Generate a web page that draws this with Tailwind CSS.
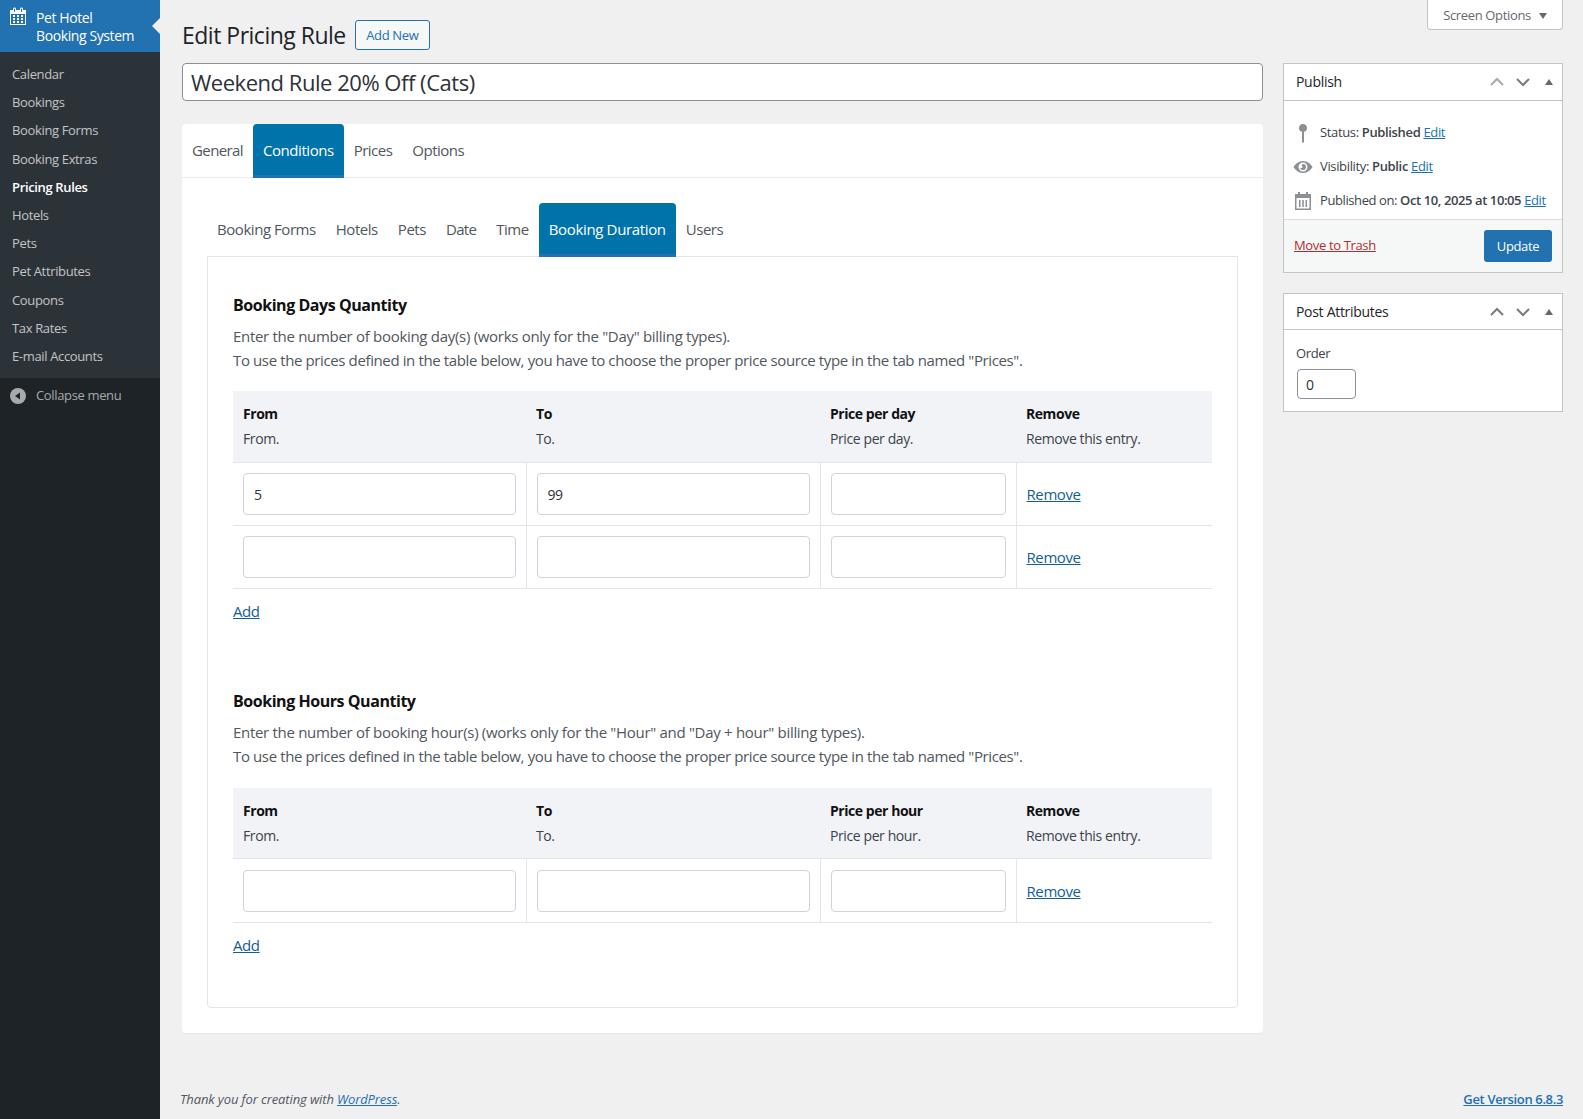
<!DOCTYPE html>
<html lang="en">
<head>
  <meta charset="UTF-8">
  <title>Edit Pricing Rule</title>
  <script src="https://cdn.jsdelivr.net/npm/@tailwindcss/browser@4"></script>
</head>
<body class="bg-[#f0f0f1] font-['Open_Sans',sans-serif] text-[13px] tracking-[-0.35px] text-[#3c434a]">
  <div class="flex h-[1119px] overflow-hidden">

    <!-- admin menu -->
    <aside class="w-[160px] shrink-0 bg-[#1d2327] text-[#c3c4c7]">
      <div class="relative flex h-[52px] bg-[#2271b1] pl-[8px] text-white">
        <svg class="mt-[6px] h-[20px] w-[20px] shrink-0" viewBox="0 0 20 20" fill="currentColor"><path d="M15 4h3v15H2V4h3V3c0-.41.15-.76.44-1.06.29-.29.65-.44 1.06-.44s.77.15 1.06.44c.29.3.44.65.44 1.06v1h4V3c0-.41.15-.76.44-1.06.29-.29.65-.44 1.06-.44s.77.15 1.06.44c.29.3.44.65.44 1.06v1zM6 3v2.500c0 .14.05.26.15.35.09.1.21.15.35.15s.26-.05.35-.15c.1-.09.15-.21.15-.35V3c0-.14-.05-.26-.15-.35-.09-.1-.21-.15-.35-.15s-.26.05-.35.15c-.1.09-.15.21-.15.35zm7 0v2.500c0 .14.05.26.14.35.1.1.22.15.36.15s.26-.05.36-.15c.09-.09.14-.21.14-.35V3c0-.14-.05-.26-.14-.35-.1-.1-.22-.15-.36-.15s-.26.05-.36.15c-.09.09-.14.21-.14.35zm4 15V8H3v10h14zM7 9v2H5V9h2zm2 0h2v2H9V9zm4 2V9h2v2h-2zm-6 1v2H5v-2h2zm2 0h2v2H9v-2zm4 2v-2h2v2h-2zm-6 1v2H5v-2h2zm4 2H9v-2h2v2zm4 0h-2v-2h2v2z"/></svg>
        <div class="ml-[8px] pt-[9px] text-[14px] leading-[18px] tracking-[-0.4px]">Pet Hotel<br>Booking System</div>
        <span class="absolute right-0 top-[18px] h-0 w-0 border-y-[8px] border-r-[8px] border-y-transparent border-r-[#f0f0f1]"></span>
      </div>
      <nav class="bg-[#2c3338] py-[8px]">
        <a class="block px-[12px] py-[5px] leading-[18.2px]">Calendar</a>
        <a class="block px-[12px] py-[5px] leading-[18.2px]">Bookings</a>
        <a class="block px-[12px] py-[5px] leading-[18.2px]">Booking Forms</a>
        <a class="block px-[12px] py-[5px] leading-[18.2px]">Booking Extras</a>
        <a class="block px-[12px] py-[5px] font-semibold leading-[18.2px] text-white">Pricing Rules</a>
        <a class="block px-[12px] py-[5px] leading-[18.2px]">Hotels</a>
        <a class="block px-[12px] py-[5px] leading-[18.2px]">Pets</a>
        <a class="block px-[12px] py-[5px] leading-[18.2px]">Pet Attributes</a>
        <a class="block px-[12px] py-[5px] leading-[18.2px]">Coupons</a>
        <a class="block px-[12px] py-[5px] leading-[18.2px]">Tax Rates</a>
        <a class="block px-[12px] py-[5px] leading-[18.2px]">E-mail Accounts</a>
      </nav>
      <div class="flex h-[36px] items-center pl-[10px] text-[#a7aaad]">
        <svg class="h-[16px] w-[16px]" viewBox="0 0 16 16"><circle cx="8" cy="8" r="8" fill="#a7aaad"/><path d="M10 4.500v7L5 8z" fill="#1d2327"/></svg>
        <span class="ml-[10px]">Collapse menu</span>
      </div>
    </aside>

    <!-- page -->
    <main class="relative flex min-w-0 flex-1 flex-col pl-[22px] pr-[20px]">
      <button class="absolute right-[20px] top-0 flex h-[30px] w-[136px] items-center justify-center gap-[8px] rounded-b-[4px] border border-t-0 border-[#c3c4c7] bg-white pt-[2px] text-[#646970]">
        Screen Options
        <span class="h-0 w-0 border-x-[4px] border-t-[6px] border-x-transparent border-t-[#646970]"></span>
      </button>

      <div class="mt-[20px] mb-[13px] flex h-[30px] items-center">
        <h1 class="text-[23px] leading-[30px] tracking-[-0.5px] text-[#1d2327]">Edit Pricing Rule</h1>
        <a class="ml-[9px] flex h-[30px] w-[75px] items-center justify-center rounded-[3px] border border-[#2271b1] bg-[#f6f7f7] pt-[1px] text-[#2271b1]">Add New</a>
      </div>

      <div class="flex gap-[20px]">
        <div class="min-w-0 flex-1">
          <input class="h-[38px] w-full rounded-[4px] border border-[#8c8f94] bg-white px-[8px] text-[22px] tracking-[-0.47px] text-[#2c3338]" value="Weekend Rule 20% Off (Cats)">

          <section class="mt-[23px] h-[909px] rounded-[4px] bg-white shadow-[0_1px_1px_rgba(0,0,0,0.04)]">
            <div class="flex h-[54px] border-b border-[#eaeaee] text-[15px] tracking-[-0.5px]">
              <a class="flex items-center px-[10px] tracking-[-0.6px] text-[#50575e]">General</a>
              <a class="-mb-px flex items-center rounded-t-[4px] border-b-[3px] border-[#2271b1] bg-[#0073aa] px-[10px] pt-[1px] tracking-[-0.45px] text-white">Conditions</a>
              <a class="flex items-center px-[10px] text-[#50575e]">Prices</a>
              <a class="flex items-center px-[10px] text-[#50575e]">Options</a>
            </div>

            <div class="mx-[25px] mt-[25px]">
              <div class="flex h-[53px] text-[15px] tracking-[-0.45px]">
                <a class="flex items-center px-[10px] text-[#50575e]">Booking Forms</a>
                <a class="flex items-center px-[10px] text-[#50575e]">Hotels</a>
                <a class="flex items-center px-[10px] text-[#50575e]">Pets</a>
                <a class="flex items-center px-[10px] tracking-[-0.7px] text-[#50575e]">Date</a>
                <a class="flex items-center px-[10px] text-[#50575e]">Time</a>
                <a class="relative z-10 -mb-px flex items-center rounded-t-[4px] border-b-[3px] border-[#2271b1] bg-[#0073aa] px-[10px] pt-[1px] tracking-[-0.35px] text-white">Booking Duration</a>
                <a class="flex items-center px-[10px] text-[#50575e]">Users</a>
              </div>

              <div class="h-[752px] rounded-b-[4px] border border-[#e4e4ea] px-[25px] pt-[36px]">
                <h3 class="text-[16px] font-bold leading-[24px] tracking-[-0.45px] text-[#111]">Booking Days Quantity</h3>
                <p class="mt-[7px] text-[15px] leading-[24px] tracking-[-0.38px] text-[#50575e]"><span class="tracking-[-0.3px]">Enter the number of booking day(s) (works only for the "Day" billing types).</span><br>To use the prices defined in the table below, you have to choose the proper price source type in the tab named "Prices".</p>
                <table class="mt-[19px] w-full table-fixed border-collapse text-[14px] tracking-[-0.4px]">
                  <colgroup><col class="w-[293px]"><col class="w-[294px]"><col class="w-[196px]"><col></colgroup>
                  <thead class="bg-[#f1f3f7] text-left">
                    <tr class="h-[71px] border-b border-[#e4e4ea] align-middle">
                      <th class="px-[10px] pb-[3px] font-normal"><b class="block font-bold leading-[28px] tracking-[-0.45px] text-[#111]">From</b>From.</th>
                      <th class="px-[10px] pb-[3px] font-normal"><b class="block font-bold leading-[28px] tracking-[-0.45px] text-[#111]">To</b>To.</th>
                      <th class="px-[10px] pb-[3px] font-normal"><b class="block font-bold leading-[28px] tracking-[-0.45px] text-[#111]">Price per day</b>Price per day.</th>
                      <th class="px-[10px] pb-[3px] font-normal"><b class="block font-bold leading-[28px] tracking-[-0.45px] text-[#111]">Remove</b>Remove this entry.</th>
                    </tr>
                  </thead>
                  <tbody>
                    <tr class="h-[63px] border-b border-[#e4e4ea]">
                      <td class="border-r border-[#e4e4ea] px-[10px]"><input class="block h-[42px] w-full rounded-[4px] border border-[#d2d2de] px-[10px] pt-[2px] text-[14px] text-[#2c3338]" value="5"></td>
                      <td class="border-r border-[#e4e4ea] px-[10px]"><input class="block h-[42px] w-full rounded-[4px] border border-[#d2d2de] px-[10px] pt-[2px] text-[14px] text-[#2c3338]" value="99"></td>
                      <td class="border-r border-[#e4e4ea] px-[10px]"><input class="block h-[42px] w-full rounded-[4px] border border-[#d2d2de] px-[10px] text-[14px]"></td>
                      <td class="px-[10px] pt-[2px] text-[15px]"><a class="text-[#135e96] underline">Remove</a></td>
                    </tr>
                    <tr class="h-[63px] border-b border-[#e4e4ea]">
                      <td class="border-r border-[#e4e4ea] px-[10px]"><input class="block h-[42px] w-full rounded-[4px] border border-[#d2d2de] px-[10px] text-[14px]"></td>
                      <td class="border-r border-[#e4e4ea] px-[10px]"><input class="block h-[42px] w-full rounded-[4px] border border-[#d2d2de] px-[10px] text-[14px]"></td>
                      <td class="border-r border-[#e4e4ea] px-[10px]"><input class="block h-[42px] w-full rounded-[4px] border border-[#d2d2de] px-[10px] text-[14px]"></td>
                      <td class="px-[10px] pt-[2px] text-[15px]"><a class="text-[#135e96] underline">Remove</a></td>
                    </tr>
                  </tbody>
                </table>
                <a class="mt-[10px] block text-[15px] leading-[24px] tracking-[-0.4px] text-[#135e96] underline">Add</a>

                <h3 class="mt-[66px] text-[16px] font-bold leading-[24px] tracking-[-0.45px] text-[#111]">Booking Hours Quantity</h3>
                <p class="mt-[7px] text-[15px] leading-[24px] tracking-[-0.38px] text-[#50575e]"><span class="tracking-[-0.3px]">Enter the number of booking hour(s) (works only for the "Hour" and "Day + hour" billing types).</span><br>To use the prices defined in the table below, you have to choose the proper price source type in the tab named "Prices".</p>
                <table class="mt-[20px] w-full table-fixed border-collapse text-[14px] tracking-[-0.4px]">
                  <colgroup><col class="w-[293px]"><col class="w-[294px]"><col class="w-[196px]"><col></colgroup>
                  <thead class="bg-[#f1f3f7] text-left">
                    <tr class="h-[71px] border-b border-[#e4e4ea] align-middle">
                      <th class="px-[10px] pb-[3px] font-normal"><b class="block font-bold leading-[28px] tracking-[-0.45px] text-[#111]">From</b>From.</th>
                      <th class="px-[10px] pb-[3px] font-normal"><b class="block font-bold leading-[28px] tracking-[-0.45px] text-[#111]">To</b>To.</th>
                      <th class="px-[10px] pb-[3px] font-normal"><b class="block font-bold leading-[28px] tracking-[-0.45px] text-[#111]">Price per hour</b>Price per hour.</th>
                      <th class="px-[10px] pb-[3px] font-normal"><b class="block font-bold leading-[28px] tracking-[-0.45px] text-[#111]">Remove</b>Remove this entry.</th>
                    </tr>
                  </thead>
                  <tbody>
                    <tr class="h-[64px] border-b border-[#e4e4ea]">
                      <td class="border-r border-[#e4e4ea] px-[10px]"><input class="block h-[42px] w-full rounded-[4px] border border-[#d2d2de] px-[10px] text-[14px]"></td>
                      <td class="border-r border-[#e4e4ea] px-[10px]"><input class="block h-[42px] w-full rounded-[4px] border border-[#d2d2de] px-[10px] text-[14px]"></td>
                      <td class="border-r border-[#e4e4ea] px-[10px]"><input class="block h-[42px] w-full rounded-[4px] border border-[#d2d2de] px-[10px] text-[14px]"></td>
                      <td class="px-[10px] pt-[2px] text-[15px]"><a class="text-[#135e96] underline">Remove</a></td>
                    </tr>
                  </tbody>
                </table>
                <a class="mt-[10px] block text-[15px] leading-[24px] tracking-[-0.4px] text-[#135e96] underline">Add</a>
              </div>
            </div>
          </section>
        </div>

        <!-- side boxes -->
        <div class="w-[280px] shrink-0">
          <div class="border border-[#c3c4c7] bg-white">
            <div class="flex h-[37px] items-center border-b border-[#c3c4c7] pl-[12px] pr-[9px]">
              <h2 class="flex-1 pb-[2px] text-[14px] font-medium tracking-[-0.3px] text-[#1d2327]">Publish</h2>
              <svg class="h-[10px] w-[14px]" viewBox="0 0 14 10" fill="none" stroke="#a7aaad" stroke-width="2"><path d="M1 8l6-6 6 6"/></svg>
              <svg class="ml-[12px] h-[10px] w-[14px]" viewBox="0 0 14 10" fill="none" stroke="#787c82" stroke-width="2"><path d="M1 2l6 6 6-6"/></svg>
              <span class="ml-[15px] h-0 w-0 border-x-[4px] border-b-[6px] border-x-transparent border-b-[#646970]"></span>
            </div>
            <div class="pt-[15px] pb-[1px]">
              <div class="flex h-[34px] items-center pl-[9px]">
                <svg class="h-[20px] w-[20px] shrink-0" viewBox="0 0 20 20" fill="#8c8f94"><path d="M10 1a4 4 0 0 1 1 7.870V19l-1 1-1-1V8.870A4 4 0 0 1 10 1z"/></svg>
                <span class="ml-[7px]">Status: <b class="font-semibold">Published</b> <a class="text-[#2271b1] underline">Edit</a></span>
              </div>
              <div class="flex h-[34px] items-center pl-[9px]">
                <svg class="h-[20px] w-[20px] shrink-0" viewBox="0 0 20 20" fill="#8c8f94"><path fill-rule="evenodd" d="M10 4c4.500 0 8 3.500 9.500 6-1.500 2.500-5 6-9.500 6S2 12.500.5 10C2 7.500 5.500 4 10 4zm0 1.500a4.500 4.500 0 1 0 0 9 4.500 4.500 0 0 0 0-9zM10 7a3 3 0 1 1-3 3c0 .6.500 1 1.200 1s1.300-.6 1.300-1.300S9 8.400 8.400 8.400C8.900 7.600 9.400 7 10 7z"/></svg>
                <span class="ml-[7px]">Visibility: <b class="font-semibold">Public</b> <a class="text-[#2271b1] underline">Edit</a></span>
              </div>
              <div class="flex h-[34px] items-center pl-[9px]">
                <svg class="h-[20px] w-[20px] shrink-0" viewBox="0 0 20 20" fill="#8c8f94"><path d="M5 1h2v2h6V1h2v2h3v16H2V3h3V1zM3.500 7v10.500h13V7h-13zM6 9h1.500v7H6V9zm3.300 0h1.500v7H9.300V9zm3.200 0H14v7h-1.500V9z"/></svg>
                <span class="ml-[7px] whitespace-nowrap tracking-[-0.4px]">Published on: <b class="font-semibold">Oct 10, 2025 at 10:05</b> <a class="text-[#2271b1] underline">Edit</a></span>
              </div>
            </div>
            <div class="flex h-[53px] items-center justify-between border-t border-[#dcdcde] bg-[#f6f7f7] pl-[10px] pr-[10px]">
              <a class="text-[#b32d2e] underline">Move to Trash</a>
              <button class="h-[32px] w-[68px] rounded-[3px] bg-[#2271b1] pt-[2px] text-white">Update</button>
            </div>
          </div>

          <div class="mt-[20px] h-[119px] border border-[#c3c4c7] bg-white">
            <div class="flex h-[36px] items-center border-b border-[#c3c4c7] pl-[12px] pr-[9px]">
              <h2 class="flex-1 text-[14px] font-medium tracking-[-0.3px] text-[#1d2327]">Post Attributes</h2>
              <svg class="h-[10px] w-[14px]" viewBox="0 0 14 10" fill="none" stroke="#787c82" stroke-width="2"><path d="M1 8l6-6 6 6"/></svg>
              <svg class="ml-[12px] h-[10px] w-[14px]" viewBox="0 0 14 10" fill="none" stroke="#787c82" stroke-width="2"><path d="M1 2l6 6 6-6"/></svg>
              <span class="ml-[15px] h-0 w-0 border-x-[4px] border-b-[6px] border-x-transparent border-b-[#646970]"></span>
            </div>
            <div class="px-[12px] pt-[14px]">
              <label class="block font-medium leading-[18px]">Order</label>
              <input class="mt-[7px] ml-[1px] block h-[30px] w-[59px] rounded-[4px] border border-[#8c8f94] px-[8px] text-[14px] text-[#2c3338]" value="0">
            </div>
          </div>
        </div>
      </div>

      <footer class="mt-auto flex items-center justify-between pb-[11px] leading-[18px] text-[#50575e]">
        <span class="-ml-[2px] italic tracking-[-0.12px]">Thank you for creating with <a class="text-[#2271b1] underline">WordPress</a>.</span>
        <a class="font-semibold text-[#2271b1] underline">Get Version 6.8.3</a>
      </footer>
    </main>
  </div>
</body>
</html>
